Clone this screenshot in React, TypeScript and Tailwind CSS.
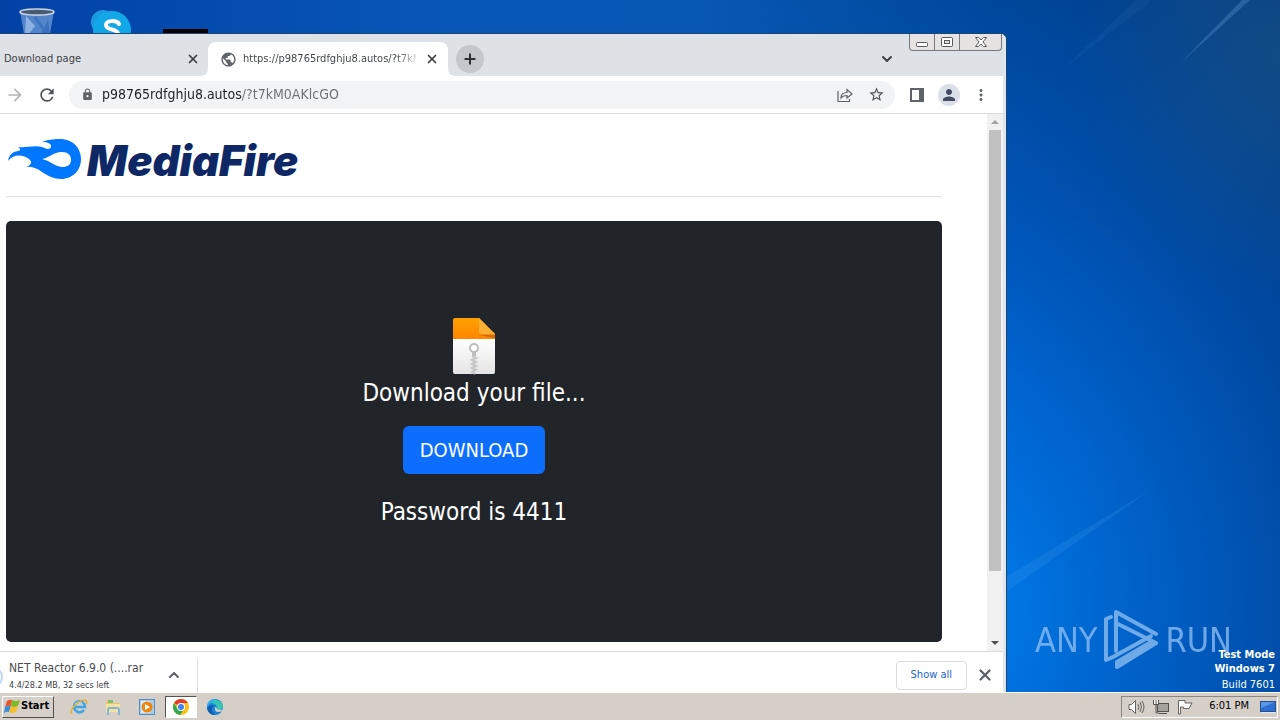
import type { ReactNode } from 'react'
import { MdArrowForward, MdLock, MdMoreVert, MdPerson, MdPublic, MdRefresh, MdStarBorder } from 'react-icons/md'
import { ChevronDown, ChevronUp, Plus, X } from 'lucide-react'

function RecycleBinIcon() {
  return (
    <svg width="40" height="34" viewBox="0 0 40 34" aria-hidden="true">
      <path d="M3 11 L37 11 L33 34 L7 34 Z" fill="#6f9bd6" fillOpacity="0.75" />
      <path d="M9 16 L18 26 L12 34 L8 34 Z" fill="#b4d0f0" fillOpacity="0.6" />
      <path d="M24 34 L31 20 L33 34 Z" fill="#2f66b8" fillOpacity="0.7" />
      <path d="M18 17 L27 30" stroke="#3c72c0" strokeWidth="3" />
      <ellipse cx="20" cy="12" rx="17" ry="3" fill="#4a5a70" stroke="#c8d4e4" strokeWidth="1.5" />
    </svg>
  )
}

function SkypeIcon() {
  return (
    <svg width="42" height="34" viewBox="0 0 42 34" aria-hidden="true">
      <circle cx="13" cy="22" r="12" fill="#1a9be0" />
      <circle cx="22" cy="30" r="19" fill="#12a8e8" />
      <path
        d="M29 24 C27 20 16 20 16 25 C16 31 28 28 28 34"
        fill="none"
        stroke="#fff"
        strokeWidth="4"
        strokeLinecap="round"
      />
    </svg>
  )
}

function FlameIcon() {
  return (
    <svg width="74" height="42" viewBox="0 0 74 42" aria-hidden="true">
      <path
        fill="#0077ff"
        fillRule="evenodd"
        d="M0 23 C1 17 5 13 11 13 C13 12 12 10 10 9 C18 10 26 7 34 9 C38 11 42 12 43 9 C44 6 40 4 34 4 C41 1 48 1 54 1 C65 2 73 10 73 21 C73 32 65 41 53 41 C46 41 40 38 34 34 C29 30 23 28 17 29 C23 28 25 24 21 21 C15 16 5 16 0 23 Z M34 21 C41 20 45 14 54 14 C60 14 63 17 63 22 C63 27 59 29 55 29 C47 29 43 23 34 21 Z"
      />
    </svg>
  )
}

function ZipFileIcon() {
  return (
    <svg width="42" height="58" viewBox="0 0 42 58" aria-hidden="true">
      <defs>
        <linearGradient id="paper" x1="0" y1="0" x2="0" y2="1">
          <stop offset="0" stopColor="#ffffff" />
          <stop offset="1" stopColor="#e4e4e4" />
        </linearGradient>
        <linearGradient id="top" x1="0" y1="0" x2="0" y2="1">
          <stop offset="0" stopColor="#ffa000" />
          <stop offset="1" stopColor="#ff8500" />
        </linearGradient>
      </defs>
      <path d="M0 22 H42 V55 Q42 57 40 57 H2 Q0 57 0 55 Z" fill="url(#paper)" />
      <path d="M2 1 H26 L42 17 V22 H0 V3 Q0 1 2 1 Z" fill="url(#top)" />
      <path d="M26 18 H42 V21 Z" fill="#c96b00" />
      <path d="M26 1 L42 17 H28 Q26 17 26 15 Z" fill="#fbb034" />
      <circle cx="21" cy="31" r="4" fill="#fff" stroke="#bdbdbd" strokeWidth="2" />
      <path d="M19 35 H23 V39 H19 Z" fill="#bdbdbd" />
      <path d="M19 39 L23 41 L19 43 L23 45 L19 47 L23 49 L19 51 L23 53 L19 55 L22 57" fill="none" stroke="#c4c4c4" strokeWidth="2" />
    </svg>
  )
}

function ChromeIcon() {
  return (
    <svg width="16" height="16" viewBox="0 0 16 16" aria-hidden="true">
      <circle cx="8" cy="8" r="8" fill="#fbc116" />
      <path d="M8 8 L1.1 4 A8 8 0 0 1 14.9 4 H8 Z" fill="#e33b2e" />
      <path d="M1.1 4 A8 8 0 0 0 7 15.9 L11 10 L4.5 10 Z" fill="#2da94f" />
      <circle cx="8" cy="8" r="4" fill="#fff" />
      <circle cx="8" cy="8" r="3" fill="#3e82f1" />
    </svg>
  )
}

function EdgeIcon() {
  return (
    <svg width="16" height="16" viewBox="0 0 16 16" aria-hidden="true">
      <circle cx="8" cy="8" r="8" fill="#1683d8" />
      <path d="M1 5 A8 8 0 0 1 16 8 C16 10 13 11 10 10 C11 6 6 3 1 5 Z" fill="#35c6b4" />
      <path d="M0 8 A8 8 0 0 1 9 0 C6 3 3 4 0 8 Z" fill="#2fb0e8" />
      <path d="M8 8 C7 13 11 14 15 12 C17 10 12 11 10 10 Q10 8 8 8 Z" fill="#d5cfc8" />
      <path d="M7 7 C3 9 5 15 9 16 A8 8 0 0 1 0 9 Q3 5 7 7 Z" fill="#0f5bb0" />
    </svg>
  )
}

function ExplorerIcon() {
  return (
    <svg width="18" height="18" viewBox="0 0 18 18" aria-hidden="true">
      <path d="M14 12 A5.5 5.5 0 1 1 15 9 H4" fill="none" stroke="#3fa5e6" strokeWidth="2.6" />
      <path d="M5 6 A5 5 0 0 1 12 5" fill="none" stroke="#a6dcf8" />
      <path d="M2 16 C-2 13 8 2 15 2 Q18 3 16 6" fill="none" stroke="#e2b338" strokeWidth="1.5" />
    </svg>
  )
}

function FolderIcon() {
  return (
    <svg width="18" height="18" viewBox="0 0 18 18" aria-hidden="true">
      <path d="M2 3 H7 L8 5 H15 V14 H2 Z" fill="#e9c665" />
      <path d="M4 2 H9 V5 H4 Z" fill="#7fbf70" />
      <path d="M2 6 H16 V14 H2 Z" fill="#f7e39b" />
      <path d="M4 17 V12 Q4 10 6 10 H13 Q15 10 15 12 V17" fill="none" stroke="#7fb6dc" strokeWidth="2" />
    </svg>
  )
}

function MediaIcon() {
  return (
    <svg width="16" height="16" viewBox="0 0 16 16" aria-hidden="true">
      <rect x="0.5" y="0.5" width="15" height="15" fill="#a8cdea" stroke="#4d8fca" />
      <rect x="2" y="2" width="9" height="12" fill="#d9ecf8" />
      <circle cx="8" cy="8" r="5.5" fill="#f0860f" />
      <path d="M6 5 L11 8 L6 11 Z" fill="#fff" />
    </svg>
  )
}

function WindowsFlag() {
  return (
    <svg width="16" height="15" viewBox="0 0 16 15" aria-hidden="true">
      <path d="M3 2 Q6 0 8 1 L7 7 Q4 6 1 8 Z" fill="#e8562a" />
      <path d="M8 1 Q12 3 16 1 L14 7 Q10 9 7 7 Z" fill="#7fba2e" />
      <path d="M1 8 Q4 6 7 7 L5 13 Q3 12 0 14 Z" fill="#3c8fd8" />
      <path d="M7 7 Q10 9 14 7 L12 13 Q8 15 5 13 Z" fill="#f6c02c" />
    </svg>
  )
}

function RunLogo() {
  return (
    <svg width="56" height="64" viewBox="0 0 56 64" fill="none" stroke="#8bbcf0" strokeWidth="4" strokeLinejoin="round" strokeLinecap="round" aria-hidden="true">
      <path d="M8 9 L3 11 V52 L10 49 L48 28" />
      <path d="M13 43 V4 L53 26" />
      <path d="M13 15 L53 35 L14 59 L14 54 L48 34" />
    </svg>
  )
}

function LightRays() {
  return (
    <svg className="absolute inset-0 h-full w-full" viewBox="0 0 1280 720" preserveAspectRatio="none" aria-hidden="true">
      <path d="M1180 66 L1242 0 L1250 0 Z" fill="#7db4e8" fillOpacity="0.25" />
      <path d="M1060 75 L1136 0 L1152 0 Z" fill="#7db4e8" fillOpacity="0.06" />
      <path d="M1006 600 L1150 510 L1006 616 Z" fill="#6fc0ff" fillOpacity="0.12" />
    </svg>
  )
}

function IconButton({ label, className = '', children }: { label: string; className?: string; children: ReactNode }) {
  return (
    <button type="button" aria-label={label} className={`flex shrink-0 items-center justify-center ${className}`}>
      {children}
    </button>
  )
}

function CaptionButtons() {
  return (
    <div className="absolute top-0 right-px flex h-[17px] divide-x divide-[#77797c] rounded-b border border-t-0 border-[#77797c] bg-[#e4e3e2]">
      <IconButton label="Minimize" className="w-[25px]">
        <svg width="14" height="14" viewBox="0 0 14 14">
          <rect x="1.5" y="7.5" width="11" height="4" rx="1" fill="#fff" stroke="#55585e" />
        </svg>
      </IconButton>
      <IconButton label="Maximize" className="w-[25px]">
        <svg width="12" height="12" viewBox="0 0 12 12">
          <rect x="0.5" y="1.5" width="11" height="9" rx="1" fill="#fff" stroke="#55585e" />
          <rect x="3.5" y="4.5" width="5" height="3" fill="#e4e3e2" stroke="#55585e" />
        </svg>
      </IconButton>
      <IconButton label="Close" className="w-[41px]">
        <svg width="14" height="12" viewBox="0 0 14 12">
          <path d="M1.5 1.5 H4.5 L7 4 L9.5 1.5 H12.5 L9 6 L12.5 10.5 H9.5 L7 8 L4.5 10.5 H1.5 L5 6 Z" fill="#fff" stroke="#55585e" />
        </svg>
      </IconButton>
    </div>
  )
}

function TabStrip() {
  return (
    <div className="relative flex h-[42px] shrink-0 items-end bg-[#dee1e6] text-[11px] text-[#3c4043]">
      <div className="flex h-[34px] w-[208px] items-center justify-between pr-[7px] pl-1">
        <span>Download page</span>
        <IconButton label="Close Download page" className="h-4 w-4">
          <X size={14} color="#3c4043" strokeWidth={3} />
        </IconButton>
      </div>
      <div className="relative flex h-[34px] w-[240px] items-center rounded-t-lg bg-white pr-2 pl-3">
        <svg className="absolute bottom-0 -left-2" width="8" height="8" viewBox="0 0 8 8" aria-hidden="true">
          <path d="M8 0 V8 H0 Q8 8 8 0" fill="#fff" />
        </svg>
        <svg className="absolute -right-2 bottom-0" width="8" height="8" viewBox="0 0 8 8" aria-hidden="true">
          <path d="M0 0 V8 H8 Q0 8 0 0" fill="#fff" />
        </svg>
        <MdPublic size={17} color="#5f6368" className="mr-[6px] shrink-0" />
        <span className="flex-1 overflow-hidden bg-linear-to-r from-[#3c4043] from-88% to-[#d8d9da] bg-clip-text whitespace-nowrap text-transparent">
          https://p98765rdfghju8.autos/?t7kM0AKlcGO
        </span>
        <IconButton label="Close active tab" className="ml-2 h-4 w-4">
          <X size={14} color="#3c4043" strokeWidth={3} />
        </IconButton>
      </div>
      <IconButton label="New tab" className="mb-[3px] ml-2 h-7 w-7 rounded-full bg-[#c4c7cc]">
        <Plus size={16} color="#2d2f33" strokeWidth={3} />
      </IconButton>
      <IconButton label="Search tabs" className="mr-[108px] mb-[9px] ml-auto h-4 w-4">
        <ChevronDown size={16} color="#3c4043" strokeWidth={3} />
      </IconButton>
      <CaptionButtons />
    </div>
  )
}

function Toolbar() {
  return (
    <div className="flex h-[38px] shrink-0 items-center border-b border-[#dadce0] bg-white pr-[13px]">
      <IconButton label="Forward" className="ml-[5px]">
        <MdArrowForward size={20} color="#b5b7ba" />
      </IconButton>
      <IconButton label="Reload" className="ml-3">
        <MdRefresh size={20} color="#4f5357" />
      </IconButton>
      <div className="ml-3 flex h-7 flex-1 items-center rounded-full bg-[#f1f3f4] pr-[10px] pl-3">
        <MdLock size={13} color="#5f6368" className="shrink-0" />
        <input
          aria-label="Address"
          type="text"
          defaultValue="p98765rdfghju8.autos/?t7kM0AKlcGO"
          className="ml-2 min-w-0 flex-1 bg-[linear-gradient(to_right,#202124_140px,#6b6f74_140px)] bg-clip-text text-[14px] text-transparent outline-none"
        />
        <IconButton label="Share">
          <svg width="16" height="16" viewBox="0 0 16 16" fill="none" stroke="#5f6368" strokeWidth="1.2" aria-hidden="true">
            <path d="M1 4 V14.5 H12.5 V12" />
            <path d="M4 11 Q4 5.5 10 5.5 V2.5 L15 7 L10 11 V8.5 Q6 8.5 4 11 Z" />
          </svg>
        </IconButton>
        <IconButton label="Bookmark" className="ml-[15px]">
          <MdStarBorder size={17} color="#4f5357" />
        </IconButton>
      </div>
      <IconButton label="Side panel" className="ml-[15px]">
        <svg width="14" height="14" viewBox="0 0 14 14" aria-hidden="true">
          <rect x="1" y="1" width="12" height="12" fill="#fff" stroke="#5f6368" strokeWidth="2" />
          <rect x="9" y="1" width="5" height="12" fill="#5f6368" />
        </svg>
      </IconButton>
      <IconButton label="Profile" className="ml-[14px] h-[22px] w-[22px] rounded-full bg-[#dbdfe8]">
        <MdPerson size={18} color="#434b62" />
      </IconButton>
      <IconButton label="Menu" className="ml-3">
        <MdMoreVert size={18} color="#5f6368" />
      </IconButton>
    </div>
  )
}

function Scrollbar() {
  return (
    <div className="flex w-4 shrink-0 flex-col items-center bg-[#f1f1f1]">
      <div className="flex h-4 items-center">
        <div className="border-x-4 border-b-4 border-x-transparent border-b-[#a3a3a3]" />
      </div>
      <div className="flex w-3 flex-1 flex-col">
        <div className="grow-440 basis-0 bg-[#c1c1c1]" />
        <div className="grow-64 basis-0" />
      </div>
      <div className="flex h-4 items-center">
        <div className="border-x-4 border-t-4 border-x-transparent border-t-[#505050]" />
      </div>
    </div>
  )
}

function DownloadPage() {
  return (
    <main className="flex min-w-0 flex-1 flex-col pr-[45px] pb-[9px] pl-[6px]">
      <header className="flex h-[83px] shrink-0 items-center border-b border-[#dee2e6] pt-2 pl-[2px]">
        <FlameIcon />
        <span className="ml-[5px] pt-[3px] font-['Inter'] text-[42px] leading-[42px] font-black text-[#0e2866] italic">MediaFire</span>
      </header>
      <section className="mt-6 flex flex-1 flex-col items-center justify-center rounded-[5px] bg-[#212529] pb-5 text-2xl leading-[29px] text-white">
        <ZipFileIcon />
        <p className="mt-1">Download your file...</p>
        <button type="button" className="mt-[18px] h-12 rounded-md bg-[#0d6efd] px-[17px] text-xl">DOWNLOAD</button>
        <p className="mt-6">Password is 4411</p>
      </section>
    </main>
  )
}

function DownloadShelf() {
  return (
    <footer className="flex h-[41px] shrink-0 items-center border-t border-[#dadce0] bg-white pt-[6px]">
      <div className="relative flex h-[35px] w-[198px] items-center justify-between border-r border-[#dadce0] pr-[15px] pl-[9px]">
        <span className="absolute top-2 -left-[19px] h-[22px] w-[22px] rounded-full border-2 border-[#bcd6fb]" />
        <div className="text-[#4a4d51]">
          <p className="text-xs leading-4">NET Reactor 6.9.0 (....rar</p>
          <p className="mt-[3px] text-[9px] leading-3 text-[#3c4043]">4.4/28.2 MB, 32 secs left</p>
        </div>
        <IconButton label="Download options" className="h-4 w-4">
          <ChevronUp size={16} color="#5f6368" strokeWidth={3} />
        </IconButton>
      </div>
      <button type="button" className="ml-auto h-[29px] rounded border border-[#dadce0] px-[14px] text-[11px] text-[#1a66c9]">
        Show all
      </button>
      <IconButton label="Close shelf" className="mx-[9px]">
        <X size={18} color="#5f6368" strokeWidth={3} />
      </IconButton>
    </footer>
  )
}

const launchers = [
  { label: 'Internet Explorer', icon: <ExplorerIcon /> },
  { label: 'File Explorer', icon: <FolderIcon /> },
  { label: 'Media Player', icon: <MediaIcon /> },
  { label: 'Chrome', icon: <ChromeIcon />, active: true },
  { label: 'Edge', icon: <EdgeIcon /> },
]

function Taskbar() {
  return (
    <div className="flex h-7 shrink-0 items-center border-t border-white bg-[#d5cfc8] px-[2px] text-[11px] text-black">
      <button type="button" className="flex h-[22px] w-[52px] items-center gap-px border border-t-white border-r-[#55524e] border-b-[#55524e] border-l-white pl-px font-bold">
        <WindowsFlag />
        <span>Start</span>
      </button>
      <nav className="ml-[9px] flex items-center gap-[2px]">
        {launchers.map((item) => (
          <IconButton
            key={item.label}
            label={item.label}
            className={
              item.active
                ? 'h-[22px] w-8 border border-t-[#55524e] border-r-white border-b-white border-l-[#55524e] bg-white'
                : 'h-[22px] w-8'
            }
          >
            {item.icon}
          </IconButton>
        ))}
      </nav>
      <div className="ml-auto flex h-[22px] items-center border border-t-[#8b8782] border-r-white border-b-white border-l-[#8b8782] pr-px pl-[6px]">
        <svg width="17" height="16" viewBox="0 0 17 16" fill="none" stroke="#66635f" aria-hidden="true">
          <path d="M1 5.5 H3.5 L7.5 1.5 V14.5 L3.5 10.5 H1 Z" fill="#fff" />
          <path d="M10 5 Q12 8 10 11 M12 3 Q15 8 12 13 M14 2 Q18 8 14 14" />
        </svg>
        <svg className="ml-2" width="16" height="16" viewBox="0 0 16 16" fill="none" stroke="#55524e" aria-hidden="true">
          <rect x="4.5" y="4.5" width="11" height="8" fill="#a5a29d" />
          <path d="M6 14.5 H14" />
          <path d="M3 5 V14 H6" />
          <path d="M0.5 1 V5.5 H5.5 V1 M3 1 V5" fill="#fff" />
        </svg>
        <svg className="ml-2" width="16" height="16" viewBox="0 0 16 16" stroke="#66635f" fill="#fff" aria-hidden="true">
          <path d="M1.5 15 V1.5 H8 V4 L15 4 L12 9.5 H6.5 V8 H3.5 V15 Z" />
        </svg>
        <span className="ml-4">6:01 PM</span>
        <svg className="ml-[11px]" width="16" height="14" viewBox="0 0 16 14" aria-hidden="true">
          <rect x="0.5" y="1.5" width="15" height="10" fill="#2d6fd0" stroke="#234f8c" />
          <path d="M1 2 H15 L1 8 Z" fill="#5b97e8" />
          <path d="M1 12.5 H15" stroke="#dfe8f4" />
        </svg>
      </div>
    </div>
  )
}

export default function App() {
  return (
    <div className="flex h-screen min-h-[480px] flex-col overflow-hidden font-['DejaVu_Sans_Condensed','DejaVu_Sans',sans-serif]">
      <div className="relative flex min-h-0 flex-1 flex-col bg-[radial-gradient(ellipse_55%_95%_at_76%_88%,#007ae8_0%,#0068d6_30%,#0054b6_62%,#004494_100%)]">
        <div className="absolute inset-0 bg-[linear-gradient(to_right,transparent_78%,rgba(0,40,100,0.3)_100%)]" />
        <div className="absolute inset-0 bg-[radial-gradient(ellipse_16%_36%_at_100%_8%,rgba(36,90,130,0.5),transparent)]" />
        <div className="absolute inset-x-0 top-0 h-9 bg-[linear-gradient(to_right,#0341a5_0%,#0757b8_35%,#0757b4_55%,transparent_78%)]" />
        <LightRays />

        <div className="relative flex h-[33px] shrink-0 items-start gap-[33px] overflow-hidden pl-[17px]">
          <RecycleBinIcon />
          <SkypeIcon />
          <div className="mt-[29px] -ml-[2px] h-2 w-[45px] bg-black" />
        </div>

        <div className="relative mr-[273px] flex min-h-0 flex-1 flex-col rounded-tr-md border-t border-r border-[#1d4676] bg-[#dfe6ee] pr-[3px]">
          <TabStrip />
          <Toolbar />
          <div className="flex min-h-0 flex-1 bg-white">
            <DownloadPage />
            <Scrollbar />
          </div>
          <DownloadShelf />
        </div>

        <div className="absolute right-12 bottom-5 flex items-center gap-[6px] text-[34px] leading-[64px] text-[#8bbcf0] opacity-80">
          <span>ANY</span>
          <RunLogo />
          <span>RUN</span>
        </div>
        <div className="absolute right-[5px] bottom-0 text-right text-[11px] leading-[14px] text-white">
          <p className="font-bold">Test Mode</p>
          <p className="font-bold">Windows 7</p>
          <p className="mt-[2px]">Build 7601</p>
        </div>
      </div>
      <Taskbar />
    </div>
  )
}
